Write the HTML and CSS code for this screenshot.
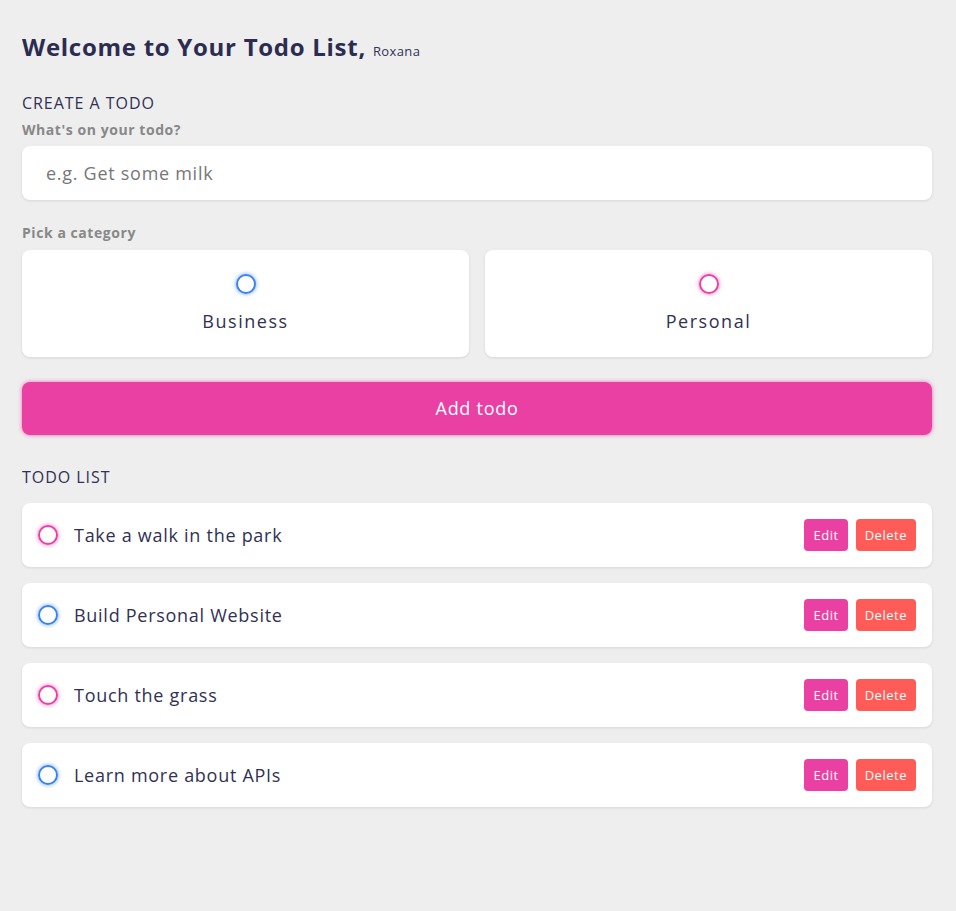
FILE: index.html
```html
<!DOCTYPE html>
<html lang="en">
<head>
<meta charset="utf-8">
<title>Todo</title>
<link rel="stylesheet" href="styles.css">
</head>
<body>
<main class="app">
  <section class="greeting">
    <h2 class="title">Welcome to Your Todo List, <span class="name">Roxana</span></h2>
  </section>

  <section class="create-todo">
    <h3>CREATE A TODO</h3>
    <h4>What's on your todo?</h4>
    <div class="text-input"><span class="placeholder">e.g. Get some milk</span></div>

    <h4 class="pick">Pick a category</h4>
    <div class="options">
      <label class="option">
        <span class="bubble business"></span>
        <div class="option-label">Business</div>
      </label>
      <label class="option">
        <span class="bubble personal"></span>
        <div class="option-label">Personal</div>
      </label>
    </div>

    <button class="submit">Add todo</button>
  </section>

  <section class="todo-list">
    <h3>TODO LIST</h3>
    <div class="list">
      <div class="todo-item">
        <span class="bubble personal"></span>
        <div class="todo-content">Take a walk in the park</div>
        <div class="actions"><button class="edit">Edit</button><button class="delete">Delete</button></div>
      </div>
      <div class="todo-item">
        <span class="bubble business"></span>
        <div class="todo-content">Build Personal Website</div>
        <div class="actions"><button class="edit">Edit</button><button class="delete">Delete</button></div>
      </div>
      <div class="todo-item">
        <span class="bubble personal"></span>
        <div class="todo-content">Touch the grass</div>
        <div class="actions"><button class="edit">Edit</button><button class="delete">Delete</button></div>
      </div>
      <div class="todo-item">
        <span class="bubble business"></span>
        <div class="todo-content">Learn more about APIs</div>
        <div class="actions"><button class="edit">Edit</button><button class="delete">Delete</button></div>
      </div>
    </div>
  </section>
</main>
</body>
</html>
```

FILE: styles.css
```css
* {
  margin: 0;
  padding: 0;
  box-sizing: border-box;
  font-family: "Open Sans", "Noto Sans", sans-serif;
}

body {
  background: #eeeeee;
  color: #313154;
}

section {
  margin: 32px 0;
  padding: 0 24px 0 22px;
}

h3 {
  font-size: 16px;
  font-weight: 400;
  line-height: 20px;
  color: #313154;
  margin-bottom: 8px;
  letter-spacing: 0.06em;
}

h4 {
  font-size: 14px;
  font-weight: 700;
  line-height: 17px;
  color: #888888;
  margin-bottom: 8px;
  letter-spacing: 0.04em;
}

h4.pick {
  margin-bottom: 9px;
}

.title {
  font-size: 24px;
  font-weight: 700;
  line-height: 29px;
  color: #2c2c50;
  letter-spacing: 0.03em;
}

.title .name {
  font-size: 13px;
  font-weight: 400;
  line-height: 1;
  margin-left: 0;
  letter-spacing: 0.03em;
  color: #313154;
}

.text-input {
  background: #fff;
  border-radius: 8px;
  box-shadow: 0 1px 3px rgba(0, 0, 0, 0.1);
  padding: 16px 24px;
  font-size: 18px;
  line-height: 22px;
  margin-bottom: 24px;
}

.placeholder {
  color: #777;
  letter-spacing: 0.04em;
}

.options {
  display: grid;
  grid-template-columns: 1fr 1fr;
  gap: 16px;
  margin-bottom: 25px;
}

.option {
  display: flex;
  flex-direction: column;
  align-items: center;
  background: #fff;
  padding: 24px;
  border-radius: 8px;
  box-shadow: 0 1px 3px rgba(0, 0, 0, 0.1);
}

.option-label {
  margin-top: 16px;
  font-size: 18px;
  line-height: 23px;
  color: #313154;
  letter-spacing: 0.085em;
}

.bubble {
  display: block;
  width: 20px;
  height: 20px;
  flex: none;
  border-radius: 50%;
  border: 2px solid #3a82ee;
  box-shadow: 0 0 4px rgba(58, 130, 238, 0.75);
}

.bubble.personal {
  border-color: #ea40a4;
  box-shadow: 0 0 4px rgba(234, 64, 164, 0.75);
}

.submit {
  display: block;
  width: 100%;
  border: none;
  background: #ea40a4;
  color: #fff;
  font-size: 18px;
  line-height: 21px;
  padding: 16px 24px;
  border-radius: 8px;
  box-shadow: 0 0 4px rgba(234, 64, 164, 0.75);
  letter-spacing: 0.04em;
}

.list {
  margin: 16px 0;
}

.todo-item {
  display: flex;
  align-items: center;
  background: #fff;
  padding: 16px;
  border-radius: 8px;
  box-shadow: 0 1px 3px rgba(0, 0, 0, 0.1);
  margin-bottom: 16px;
}

.todo-item .bubble {
  margin-right: 16px;
}

.todo-content {
  flex: 1;
  font-size: 18px;
  line-height: 22px;
  color: #313154;
  letter-spacing: 0.04em;
}

.actions {
  display: flex;
  align-items: center;
  gap: 8px;
}

.actions button {
  border: none;
  color: #fff;
  font-size: 13px;
  line-height: 16px;
  padding: 8px 9px;
  border-radius: 4px;
  letter-spacing: 0.04em;
}

.actions .edit {
  background: #ea40a4;
}

.actions .delete {
  background: #ff5b57;
}
```
